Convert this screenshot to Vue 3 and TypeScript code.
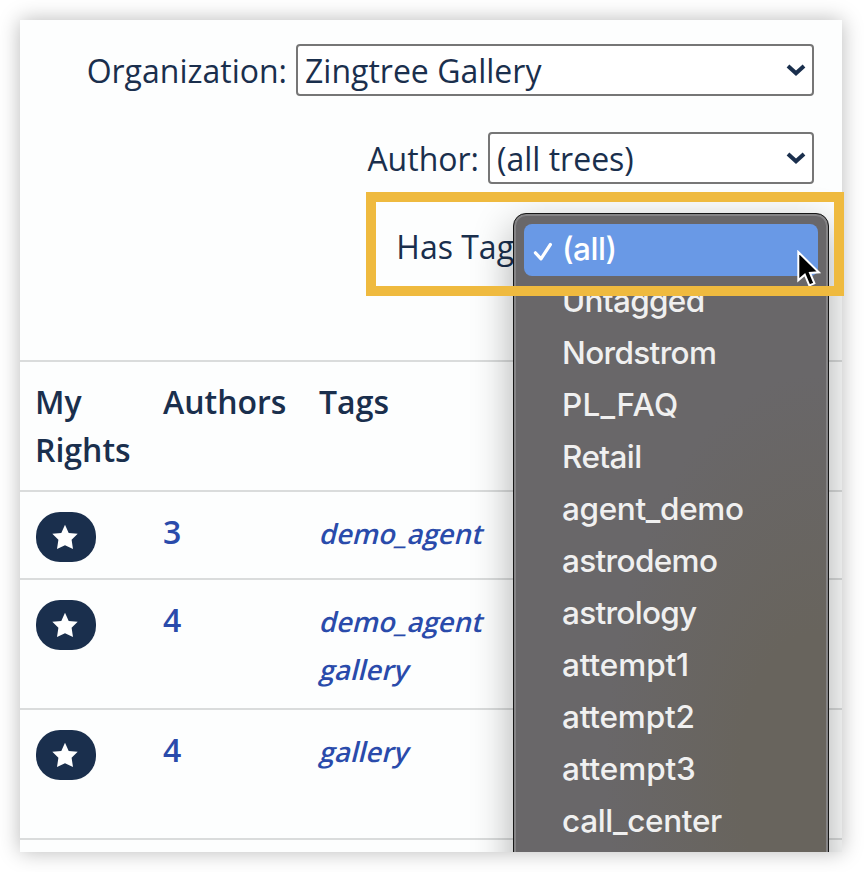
<script setup lang="ts">
interface TreeRow {
  authors: number
  tags: string[]
  height: number
}

interface TagOption {
  label: string
  spacing: number
}

const rows: TreeRow[] = [
  { authors: 3, tags: ['demo_agent'], height: 88 },
  { authors: 4, tags: ['demo_agent', 'gallery'], height: 130 },
  { authors: 4, tags: ['gallery'], height: 132 },
]

const options: TagOption[] = [
  { label: 'Untagged', spacing: -0.7 },
  { label: 'Nordstrom', spacing: -0.65 },
  { label: 'PL_FAQ', spacing: 0.3 },
  { label: 'Retail', spacing: -0.6 },
  { label: 'agent_demo', spacing: -0.35 },
  { label: 'astrodemo', spacing: -0.65 },
  { label: 'astrology', spacing: -0.7 },
  { label: 'attempt1', spacing: -0.1 },
  { label: 'attempt2', spacing: -0.2 },
  { label: 'attempt3', spacing: -0.1 },
  { label: 'call_center', spacing: -0.35 },
]
</script>

<template>
  <main class="page">
    <section class="card">
      <form class="filters">
        <div class="field">
          <span class="label">Organization:</span>
          <div class="select org">
            <span>Zingtree Gallery</span>
            <svg class="chevron" viewBox="0 0 20 14"><path d="M2 3 L10 10.3 L18 3" /></svg>
          </div>
        </div>
        <div class="field">
          <span class="label">Author:</span>
          <div class="select author">
            <span>(all trees)</span>
            <svg class="chevron" viewBox="0 0 20 14"><path d="M2 3 L10 10.3 L18 3" /></svg>
          </div>
        </div>
        <div class="field tag-field"><span class="label">Has Tag</span></div>
      </form>

      <div class="table">
        <div class="row head">
          <div class="rights-head">My<br />Rights</div>
          <div>Authors</div>
          <div>Tags</div>
        </div>
        <div v-for="(row, i) in rows" :key="i" class="row" :style="{ height: row.height + 'px' }">
          <div class="rights">
            <span class="pill">
              <svg class="star" viewBox="0 0 26 26">
                <path d="M13 .8 L16.7 9 L25.7 9.8 L19.6 15.8 L21 25 L13 21.2 L5 25 L6.4 15.8 L.3 9.8 L9.3 9 Z" />
              </svg>
            </span>
          </div>
          <div class="count">{{ row.authors }}</div>
          <div class="tags"><span v-for="tag in row.tags" :key="tag" class="tag">{{ tag }}</span></div>
        </div>
      </div>

      <div class="menu-clip">
        <div class="menu">
          <div class="option active">
            <svg class="check" viewBox="0 0 20 22"><path d="M2.4 11.8 L8 17.8 L17.4 3.5" /></svg>
            <span class="current">(all)</span>
          </div>
          <div v-for="o in options" :key="o.label" class="option">
            <span :style="{ letterSpacing: o.spacing + 'px' }">{{ o.label }}</span>
          </div>
        </div>
      </div>
    </section>

    <svg class="cursor" viewBox="0 0 24 38">
      <path d="M1.3 2 L1.3 30.3 L7.8 24.7 L12.3 35.5 L17.4 33.3 L13 23 L21.8 22.3 Z" />
    </svg>
    <div class="highlight"></div>
  </main>
</template>

<style>
body {
  margin: 0;
  background: #fff;
}
</style>

<style scoped>
.page {
  position: relative;
  box-sizing: border-box;
  width: 864px;
  height: 872px;
  padding: 20px 22px 20px 20px;
  overflow: hidden;
  font-family: 'Open Sans', sans-serif;
  font-size: 32px;
  line-height: 48px;
  color: #1a2f4d;
}
.card {
  position: relative;
  height: 832px;
  background: #fdfefe;
  box-shadow: 0 0 20px rgba(0, 0, 0, 0.28);
}
.filters {
  box-sizing: border-box;
  display: flex;
  flex-direction: column;
  gap: 36px;
  height: 340px;
  padding: 24px 28px 0 0;
}
.field {
  display: flex;
  align-items: center;
  justify-content: flex-end;
  height: 52px;
  gap: 9px;
  white-space: nowrap;
}
.label {
  padding-top: 1px;
}
.tag-field {
  padding-right: 300px;
}
.select {
  box-sizing: border-box;
  display: flex;
  align-items: center;
  justify-content: space-between;
  height: 52px;
  padding: 1px 6px 0 7px;
  border: 2px solid #767676;
  border-radius: 4px;
  background: #fff;
}
.org {
  width: 518px;
}
.author {
  width: 326px;
}
.chevron {
  width: 20px;
  height: 14px;
  margin-bottom: 1px;
  fill: none;
  stroke: #1a2f4d;
  stroke-width: 4;
}
.row {
  box-sizing: border-box;
  display: grid;
  grid-template-columns: 127px 156px 1fr;
  padding: 16px 16px 0;
  border-top: 2px solid #dadcdc;
}
.row:last-child {
  border-bottom: 2px solid #dadcdc;
}
.head {
  height: 130px;
  font-weight: 600;
}
.rights-head {
  margin-left: -1px;
}
.rights {
  padding-top: 4px;
}
.pill {
  display: flex;
  align-items: center;
  justify-content: center;
  width: 60px;
  height: 50px;
  border-radius: 24px;
  background: #1a2f4d;
}
.star {
  width: 26px;
  height: 26px;
  margin-right: 2px;
  fill: #fff;
}
.count {
  font-weight: 550;
  color: #2a4bab;
}
.tags {
  display: flex;
  flex-direction: column;
  align-items: flex-start;
  padding: 2px 0 0 2px;
  font-size: 27.5px;
  font-weight: 550;
  color: #2a4bab;
}
.tag {
  transform: skewX(-14deg);
}
.menu-clip {
  position: absolute;
  inset: 0;
  overflow: hidden;
}
.menu {
  position: absolute;
  box-sizing: border-box;
  left: 493px;
  top: 193px;
  width: 316px;
  height: 700px;
  padding: 10px;
  border: 1px solid #171717;
  border-radius: 13px;
  background:
    radial-gradient(ellipse 210px 400px at 300px 560px, #68645d 35%, #68645d00 100%),
    #696769;
  box-shadow: inset 0 0 0 2px #858486, 0 14px 40px rgba(0, 0, 0, 0.33);
  font-family: Inter, sans-serif;
  font-size: 31.5px;
  font-weight: 450;
  color: #f0f0f0;
}
.option {
  box-sizing: border-box;
  display: flex;
  align-items: center;
  height: 52px;
  padding: 0 0 2px 38px;
}
.active {
  gap: 9px;
  width: 294px;
  padding-left: 9px;
  border-radius: 8px;
  background: #6999e6;
  color: #fff;
}
.current {
  letter-spacing: -0.5px;
}
.check {
  width: 20px;
  height: 22px;
  margin-top: 5px;
  fill: none;
  stroke: #fff;
  stroke-width: 3.2;
  stroke-linecap: round;
  stroke-linejoin: round;
}
.cursor {
  position: absolute;
  left: 797px;
  top: 250px;
  width: 24px;
  height: 38px;
  fill: #000;
  stroke: #fff;
  stroke-width: 2;
}
.highlight {
  position: absolute;
  box-sizing: border-box;
  left: 366px;
  top: 192px;
  width: 478px;
  height: 104px;
  border: 10px solid #efba3f;
}
</style>
